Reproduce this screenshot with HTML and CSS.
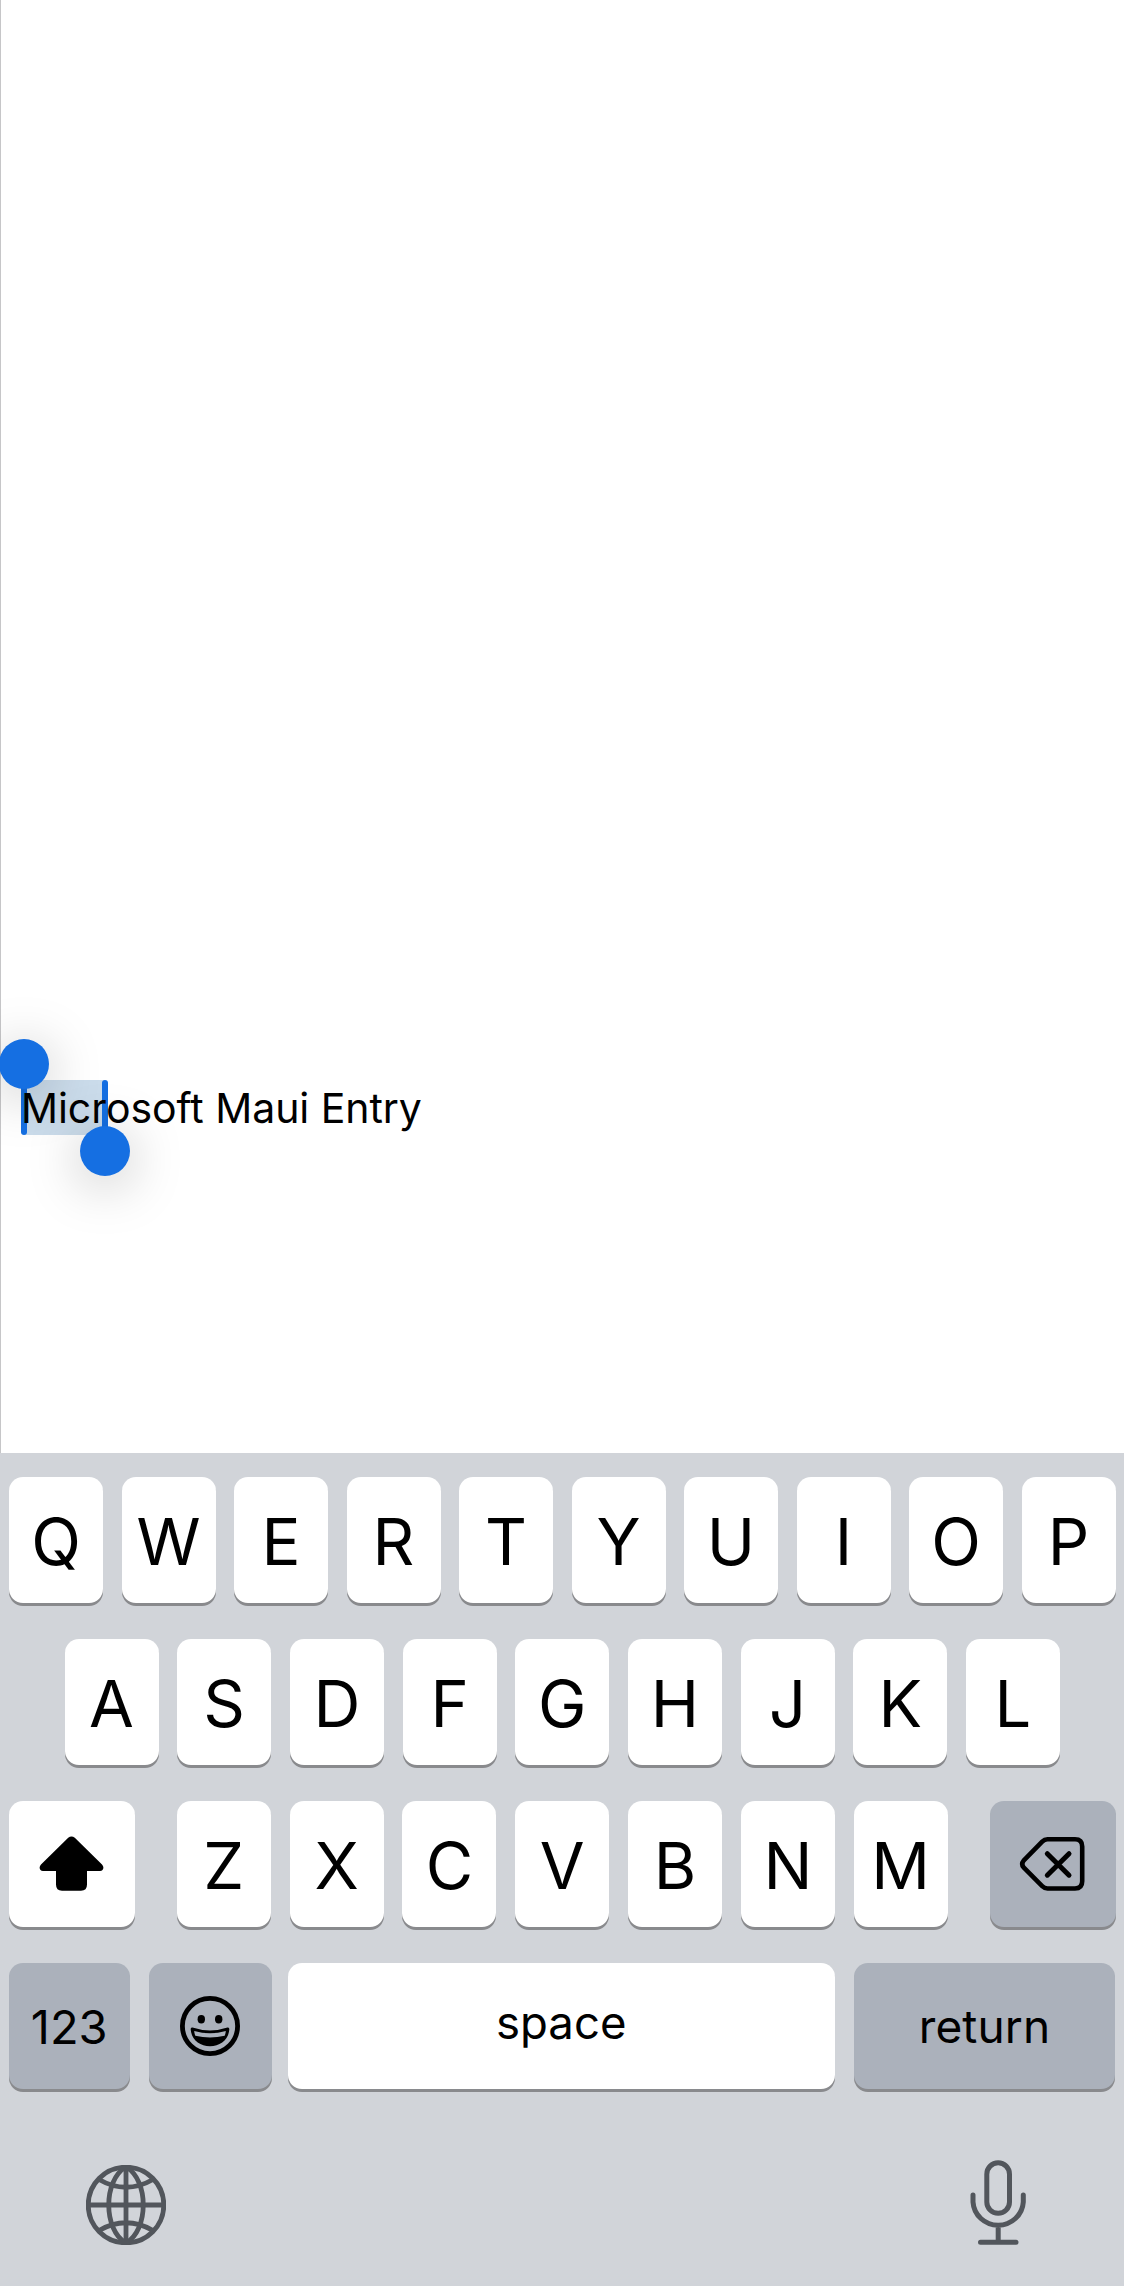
FILE: index.html
```
<!DOCTYPE html>
<html lang="en">
<head>
<meta charset="utf-8">
<title>Entry</title>
<link rel="stylesheet" href="styles.css">
</head>
<body>
<main class="page">
  <div class="entry">
    <span class="selection"></span>
    <span class="handle handle-start"></span>
    <span class="handle handle-end"></span>
    <span class="entry-text">Microsoft Maui Entry</span>
  </div>
</main>
<section class="keyboard">
  <div class="row row-top">
    <div class="key"><span>Q</span></div><div class="key"><span>W</span></div><div class="key"><span>E</span></div><div class="key"><span>R</span></div><div class="key"><span>T</span></div><div class="key"><span>Y</span></div><div class="key"><span>U</span></div><div class="key"><span>I</span></div><div class="key"><span>O</span></div><div class="key"><span>P</span></div>
  </div>
  <div class="row row-home">
    <div class="key"><span>A</span></div><div class="key"><span>S</span></div><div class="key"><span>D</span></div><div class="key"><span>F</span></div><div class="key"><span>G</span></div><div class="key"><span>H</span></div><div class="key"><span>J</span></div><div class="key"><span>K</span></div><div class="key"><span>L</span></div>
  </div>
  <div class="row row-bottom">
    <div class="key shift">
      <svg width="126" height="126" viewBox="0 0 126 126"><path d="M59.2 36.8Q62.5 34 65.8 36.8L93 63.6Q95.500 66.500 93.500 69Q92.600 70 91 70H78V83.500Q78 89.700 72 89.700H53Q47 89.700 47 83.500V70H34Q32.400 70 31.500 69Q29.500 66.500 32 63.600Z"/></svg>
    </div>
    <div class="letters">
      <div class="key"><span>Z</span></div><div class="key"><span>X</span></div><div class="key"><span>C</span></div><div class="key"><span>V</span></div><div class="key"><span>B</span></div><div class="key"><span>N</span></div><div class="key"><span>M</span></div>
    </div>
    <div class="key gray delete">
      <svg width="126" height="126" viewBox="0 0 126 126" fill="none" stroke="#000" stroke-width="4.600" stroke-linecap="round" stroke-linejoin="round"><path d="M57.500 38.300H85Q92.200 38.300 92.200 45.500V80.300Q92.200 87.500 85 87.500H57.500Q54.500 87.500 52.200 85.200L33.600 66.400Q30.800 63 33.600 59.600L52.200 40.600Q54.500 38.300 57.500 38.300Z"/><path d="M57.300 52.700 79 74.200M79 52.700 57.300 74.200" stroke-width="5"/></svg>
    </div>
  </div>
  <div class="row row-space">
    <div class="key gray num"><span>123</span></div>
    <div class="key gray emoji">
      <svg width="60" height="60" viewBox="0 0 60 60"><circle cx="30" cy="30" r="27.600" fill="none" stroke="#000" stroke-width="4.800"/><ellipse cx="21.300" cy="23.300" rx="3.700" ry="4.200"/><ellipse cx="38.700" cy="23.300" rx="3.700" ry="4.200"/><path fill-rule="evenodd" d="M12.500 31.600Q30 37.500 47.500 31.600Q49.500 31.200 49.300 33.500C48.500 44 40 50.200 30 50.200S11.500 44 10.700 33.500Q10.500 31.200 12.500 31.600ZM14.200 34.900Q14.400 37.700 15.300 39.800Q30 43 44.700 39.800Q45.600 37.700 45.800 34.900Q30 39.500 14.200 34.900Z"/></svg>
    </div>
    <div class="key space"><span>space</span></div>
    <div class="key gray return"><span>return</span></div>
  </div>
  <div class="dock">
    <svg width="80" height="80" viewBox="0 0 80 80" fill="none" stroke="#52565c" stroke-width="4.800"><circle cx="40" cy="40" r="37.800"/><path d="M40 2V78M2 40H78M13 14.500Q40 30 67 14.500M13 65.500Q40 50 67 65.500"/><path d="M40 2C17 15 17 65 40 78M40 2C63 15 63 65 40 78"/></svg>
    <svg width="56" height="86" viewBox="0 0 56 86" fill="none" stroke="#52565c" stroke-width="5" stroke-linecap="round"><rect x="16.800" y="2.800" width="22.700" height="50.500" rx="11.350"/><path d="M3 35V42A25.200 24.800 0 0 0 53.300 42V35M28.200 67V82M10.500 82.200H46"/></svg>
  </div>
</section>
</body>
</html>
```
FILE: styles.css
```
* { box-sizing: border-box; }
body {
  margin: 0;
  width: 1124px;
  height: 2286px;
  display: flex;
  flex-direction: column;
  overflow: hidden;
  background: #fff;
  color: #000;
  font-family: Inter, "Liberation Sans", sans-serif;
  font-weight: 370;
}
.page {
  height: 1453px;
  padding: 1080px 0 0 23px;
  border-left: 1px solid #c6c6c8;
}
.entry {
  position: relative;
  height: 55px;
  display: flex;
  align-items: center;
}
.entry-text {
  position: relative;
  margin: 2px 0 0 -3px;
  font-size: 41px;
  line-height: 55px;
  letter-spacing: -0.05px;
  white-space: nowrap;
}
.selection {
  position: absolute;
  left: 0;
  top: 0;
  width: 81px;
  height: 55px;
  background: #cbdceb;
}
.handle {
  position: absolute;
  top: 0;
  width: 6px;
  height: 55px;
  border-radius: 3px;
  background: #156fe2;
}
.handle::after {
  content: "";
  position: absolute;
  left: -22px;
  width: 50px;
  height: 50px;
  border-radius: 50%;
  background: #156fe2;
  box-shadow: 0 8px 54px rgba(0, 0, 0, 0.26);
}
.handle-start { left: -3px; }
.handle-end { left: 78px; }
.handle-start::after { top: -41px; }
.handle-end::after { top: 45.500px; }
.keyboard {
  height: 833px;
  padding: 24px 8.500px 0 9px;
  background: #d1d4d9;
}
.row {
  display: flex;
  justify-content: space-between;
  height: 126px;
  margin-bottom: 36px;
}
.row-home { padding: 0 55.500px; }
.letters {
  width: 771px;
  display: flex;
  justify-content: space-between;
}
.key {
  width: 94px;
  height: 126px;
  display: flex;
  align-items: center;
  justify-content: center;
  border-radius: 14px;
  background: #fff;
  box-shadow: 0 3px 0 #898a8d;
  font-size: 65px;
  line-height: 1;
}
.key span { padding-top: 2px; }
.gray { background: #abb1bb; }
.shift, .delete { width: 126px; }
.row-space { justify-content: flex-start; }
.num { width: 120.500px; margin-right: 19px; font-size: 47px; }
.emoji { width: 123px; margin-right: 16.500px; }
.space { width: 546.500px; margin-right: 19.500px; font-size: 45.500px; }
.return { width: 261px; font-size: 46px; letter-spacing: 0.1px; }
.key.space span { padding: 0 0 6px; }
.key.num span, .key.return span { padding-top: 0; }
.dock {
  display: flex;
  align-items: flex-start;
  justify-content: space-between;
  padding: 35px 90px 0 77px;
}
.dock svg:first-child { margin-top: 4.500px; }
```
